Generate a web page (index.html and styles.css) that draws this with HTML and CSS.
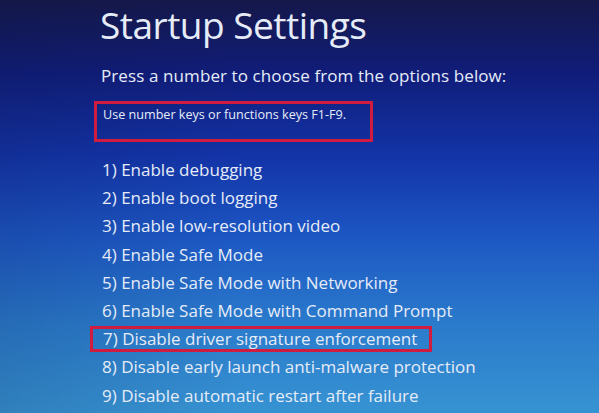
FILE: index.html
```html
<!DOCTYPE html>
<html lang="en">
<head>
    <meta charset="UTF-8">
    <meta name="viewport" content="width=device-width, initial-scale=1.0">
    <title>Startup Settings</title>
    <link rel="stylesheet" href="styles.css">
</head>
<body>
    <main class="startup">
        <h1 class="startup__title">Startup Settings</h1>
        <p class="startup__prompt">Press a number to choose from the options below:</p>
        <div class="startup__hint">Use number keys or functions keys F1-F9.</div>

        <ol class="startup__options">
            <li>1) Enable debugging</li>
            <li>2) Enable boot logging</li>
            <li>3) Enable low-resolution video</li>
            <li>4) Enable Safe Mode</li>
            <li>5) Enable Safe Mode with Networking</li>
            <li>6) Enable Safe Mode with Command Prompt</li>
            <li class="startup__marked">7) Disable driver signature enforcement</li>
            <li>8) Disable early launch anti-malware protection</li>
            <li>9) Disable automatic restart after failure</li>
        </ol>
    </main>
</body>
</html>
```

FILE: styles.css
```css
html, body {
    height: 100%;
}

body {
    margin: 0;
    overflow: hidden;
    font-family: 'Open Sans', 'Noto Sans', sans-serif;
    color: #e6ecf7;
    background:
        linear-gradient(to right, rgba(10, 20, 60, 0.15), rgba(10, 20, 60, 0) 40%),
        linear-gradient(to bottom, #15184a 0%, #101d7a 18%, #1334a8 38%, #1d58c4 58%, #2a7acb 78%, #3793d2 100%);
}

.startup {
    padding-left: 100px;
}

.startup__title {
    margin: 0;
    font-size: 37px;
    font-weight: 400;
    letter-spacing: -0.5px;
    line-height: 50px;
}

.startup__prompt {
    margin: 16px 0 0 1px;
    font-size: 17px;
    line-height: 20px;
    letter-spacing: 0.1px;
}

.startup__hint {
    box-sizing: border-box;
    width: 279px;
    height: 41px;
    margin: 15px 0 0 -6px;
    padding-left: 6px;
    border: 3px solid #d01c3e;
    font-size: 12.6px;
    line-height: 21px;
}

.startup__options {
    list-style: none;
    margin: 14px 0 0 2px;
    padding: 0;
}

.startup__options li {
    font-size: 17px;
    line-height: 28.2px;
}

.startup__options .startup__marked {
    box-sizing: border-box;
    width: 342px;
    margin: 1px 0 1px -12px;
    padding-left: 10px;
    border: 3px solid #d01c3e;
    line-height: 20.2px;
}
```
